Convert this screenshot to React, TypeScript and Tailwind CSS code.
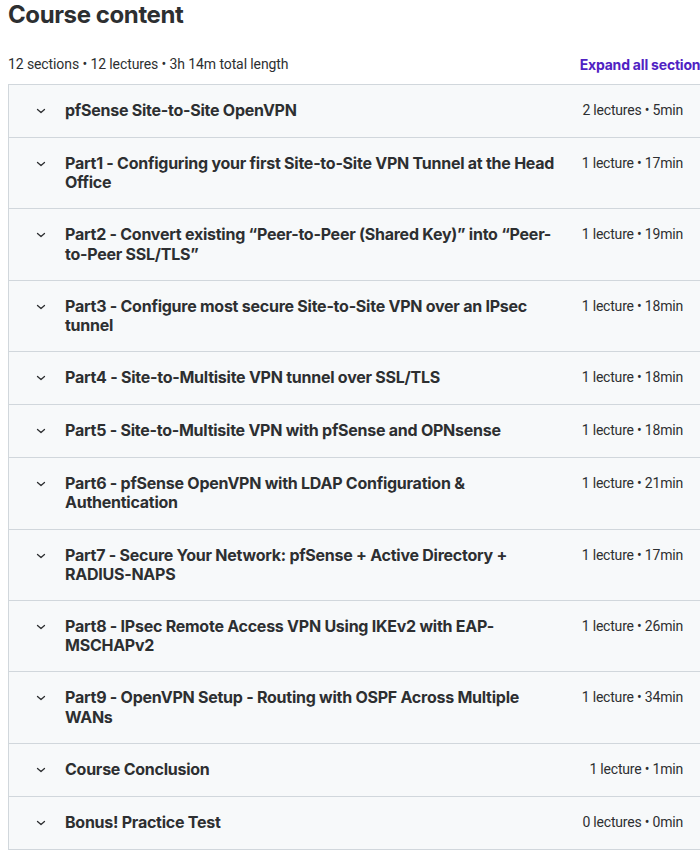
import React from "react";

type Section = { title: string; meta: string };

const sections: Section[] = [
  { title: "pfSense Site-to-Site OpenVPN", meta: "2 lectures • 5min" },
  { title: "Part1 - Configuring your first Site-to-Site VPN Tunnel at the Head Office", meta: "1 lecture • 17min" },
  { title: "Part2 - Convert existing “Peer-to-Peer (Shared Key)” into “Peer-to-Peer SSL/TLS”", meta: "1 lecture • 19min" },
  { title: "Part3 - Configure most secure Site-to-Site VPN over an IPsec tunnel", meta: "1 lecture • 18min" },
  { title: "Part4 - Site-to-Multisite VPN tunnel over SSL/TLS", meta: "1 lecture • 18min" },
  { title: "Part5 - Site-to-Multisite VPN with pfSense and OPNsense", meta: "1 lecture • 18min" },
  { title: "Part6 - pfSense OpenVPN with LDAP Configuration & Authentication", meta: "1 lecture • 21min" },
  { title: "Part7 - Secure Your Network: pfSense + Active Directory + RADIUS-NAPS", meta: "1 lecture • 17min" },
  { title: "Part8 - IPsec Remote Access VPN Using IKEv2 with EAP-MSCHAPv2", meta: "1 lecture • 26min" },
  { title: "Part9 - OpenVPN Setup - Routing with OSPF Across Multiple WANs", meta: "1 lecture • 34min" },
  { title: "Course Conclusion", meta: "1 lecture • 1min" },
  { title: "Bonus! Practice Test", meta: "0 lectures • 0min" },
];

const Chevron = () => (
  <svg width="16" height="20" viewBox="0 0 16 20" className="shrink-0">
    <path d="M4.5 8.5 L8 11.5 L11.5 8.5" fill="none" stroke="#2d2f31" strokeWidth="1.3" strokeLinecap="round" strokeLinejoin="round" />
  </svg>
);

export default function App() {
  return (
    <div className="w-[700px] h-[851px] overflow-hidden bg-white text-[#2d2f31] font-['Inter',sans-serif]">
      <div className="ml-2 w-[700px]">
        <h2 className="text-[24px] leading-[30px] font-bold tracking-[-0.4px] mb-6">Course content</h2>
        <div className="flex items-center justify-between h-5 mb-[10px] text-[14px]">
          <span className="font-['Roboto',sans-serif] tracking-[-0.1px]">12 sections • 12 lectures • 3h 14m total length</span>
          <span className="font-bold tracking-[-0.2px] text-[#5022c3]">Expand all sections</span>
        </div>
        <div className="border border-[#d1d7dc]">
          {sections.map((s, i) => (
            <div
              key={i}
              className={`flex items-start bg-[#f7f9fa] py-4 pl-6 pr-6 ${i > 0 ? "border-t border-[#d1d7dc]" : ""}`}
            >
              <Chevron />
              <div className="flex-1 ml-4 text-[16px] leading-[19.2px] font-bold tracking-[-0.25px]">{s.title}</div>
              <div className="ml-4 text-[14px] leading-[19.2px] whitespace-nowrap tracking-[-0.2px] font-['Roboto',sans-serif]">{s.meta}</div>
            </div>
          ))}
        </div>
      </div>
    </div>
  );
}
